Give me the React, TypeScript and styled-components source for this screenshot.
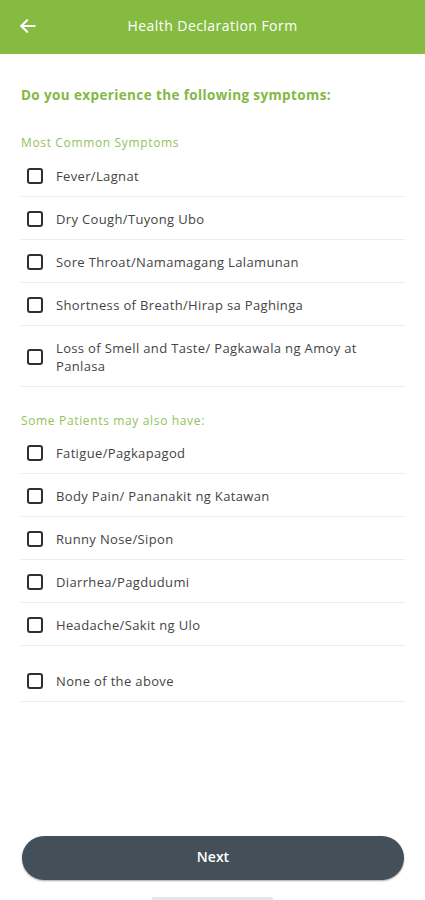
import React from "react";
import styled, { createGlobalStyle } from "styled-components";

const Global = createGlobalStyle`
  html, body { margin: 0; padding: 0; background: #ffffff; }
  * { box-sizing: border-box; }
  body { font-family: "Open Sans", "Liberation Sans", sans-serif; }
`;

const Page = styled.div`
  width: 425px;
  height: 900px;
  display: flex;
  flex-direction: column;
  overflow: hidden;
  background: #fff;
`;

const Header = styled.header`
  height: 54px;
  background: #86bb42;
  display: flex;
  align-items: center;
  position: relative;
  flex-shrink: 0;
`;

const BackButton = styled.div`
  position: absolute;
  left: 17px;
  top: 15px;
  width: 22px;
  height: 22px;
  display: flex;
  align-items: center;
  justify-content: center;
`;

const Title = styled.h1`
  flex: 1;
  margin: 0;
  text-align: center;
  color: #ffffff;
  font-size: 14px;
  font-weight: 500;
  letter-spacing: 0.45px;
  padding-bottom: 4px;
`;

const Content = styled.main`
  padding: 0 20px 0 21px;
  display: flex;
  flex-direction: column;
`;

const Question = styled.h2`
  margin: 32px 0 0;
  color: #84b844;
  font-size: 13.5px;
  font-weight: 700;
  line-height: 18px;
  letter-spacing: 0.38px;
`;

const SectionLabel = styled.div<{ $top: number; $bottom: number }>`
  margin-top: ${(p) => p.$top}px;
  margin-bottom: ${(p) => p.$bottom}px;
  color: #94c25a;
  font-size: 12px;
  line-height: 14px;
  letter-spacing: 0.65px;
`;

const Row = styled.label<{ $padTop?: number }>`
  display: flex;
  align-items: center;
  gap: 13px;
  padding: ${(p) => p.$padTop ?? 13}px 0 11px 6px;
  border-bottom: 1px solid #ececec;
`;

const Box = styled.span`
  width: 16px;
  height: 16px;
  border: 2px solid #2f2f2f;
  border-radius: 3px;
  flex-shrink: 0;
`;

const RowText = styled.span`
  color: #444444;
  font-size: 13px;
  line-height: 18px;
  letter-spacing: 0.35px;
  padding-right: 26px;
`;

const Footer = styled.footer`
  margin-top: auto;
  display: flex;
  flex-direction: column;
  align-items: center;
`;

const NextButton = styled.button`
  width: 382px;
  height: 44px;
  margin-left: 1px;
  padding-bottom: 4px;
  border: none;
  border-radius: 22px;
  background: #434f59;
  color: #ffffff;
  font-family: "Open Sans", "Liberation Sans", sans-serif;
  font-size: 14px;
  font-weight: 600;
  box-shadow: 0 1px 2px rgba(0, 0, 0, 0.35);
`;

const HomeIndicator = styled.div`
  margin-top: 17px;
  width: 121px;
  height: 3px;
  background: #e6e6e6;
  border-radius: 2px 2px 0 0;
`;

const common = [
  "Fever/Lagnat",
  "Dry Cough/Tuyong Ubo",
  "Sore Throat/Namamagang Lalamunan",
  "Shortness of Breath/Hirap sa Paghinga",
  "Loss of Smell and Taste/ Pagkawala ng Amoy at Panlasa",
];

const others = [
  "Fatigue/Pagkapagod",
  "Body Pain/ Pananakit ng Katawan",
  "Runny Nose/Sipon",
  "Diarrhea/Pagdudumi",
  "Headache/Sakit ng Ulo",
];

const Item = ({ text, padTop }: { text: string; padTop?: number }) => (
  <Row $padTop={padTop}>
    <Box />
    <RowText>{text}</RowText>
  </Row>
);

export default function App() {
  return (
    <>
      <Global />
      <Page>
        <Header>
          <BackButton>
            <svg width="20" height="20" viewBox="0 0 24 24" fill="none" stroke="#fff" strokeWidth="2.6" strokeLinecap="round" strokeLinejoin="round">
              <path d="M20 12H4" />
              <path d="M11 5l-7 7 7 7" />
            </svg>
          </BackButton>
          <Title>Health Declaration Form</Title>
        </Header>
        <Content>
          <Question>Do you experience the following symptoms:</Question>
          <SectionLabel $top={32} $bottom={4}>Most Common Symptoms</SectionLabel>
          {common.map((t) => (
            <Item key={t} text={t} />
          ))}
          <SectionLabel $top={27} $bottom={3}>Some Patients may also have:</SectionLabel>
          {others.map((t) => (
            <Item key={t} text={t} />
          ))}
          <Item text="None of the above" padTop={26} />
        </Content>
        <Footer>
          <NextButton>Next</NextButton>
          <HomeIndicator />
        </Footer>
      </Page>
    </>
  );
}
